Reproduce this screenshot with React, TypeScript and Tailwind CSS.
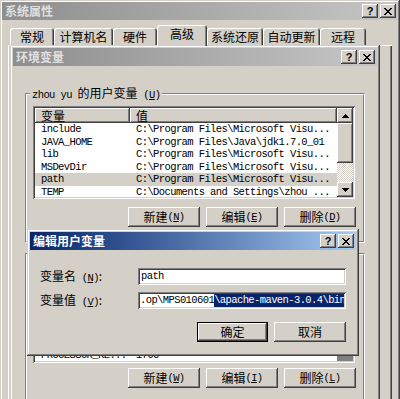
import type { ReactNode } from "react";

// classic win2k bevels
const raised =
  "bg-[#d4d0c8] shadow-[inset_-1px_-1px_#404040,inset_1px_1px_#ffffff,inset_-2px_-2px_#808080,inset_2px_2px_#d4d0c8]";
const sunken =
  "shadow-[inset_1px_1px_#808080,inset_-1px_-1px_#ffffff,inset_2px_2px_#404040,inset_-2px_-2px_#d4d0c8]";
const frame =
  "bg-[#d4d0c8] shadow-[inset_-1px_-1px_#404040,inset_1px_1px_#d4d0c8,inset_-2px_-2px_#808080,inset_2px_2px_#ffffff]";
const mono =
  "font-['Liberation_Mono','Noto_Sans_CJK_SC',monospace] text-[10.5px] tracking-[-0.6px]";

const tabs = [
  { label: "常规", w: "w-[44px]" },
  { label: "计算机名", w: "w-[59px]" },
  { label: "硬件", w: "w-[44px]" },
  { label: "高级", w: "w-[50px]", active: true },
  { label: "系统还原", w: "w-[56px]" },
  { label: "自动更新", w: "w-[57px]" },
  { label: "远程", w: "w-[46px]" },
];

const userVars = [
  ["include", "C:\\Program Files\\Microsoft Visu..."],
  ["JAVA_HOME", "C:\\Program Files\\Java\\jdk1.7.0_01"],
  ["lib", "C:\\Program Files\\Microsoft Visu..."],
  ["MSDevDir", "C:\\Program Files\\Microsoft Visu..."],
  ["path", "C:\\Program Files\\Microsoft Visu..."],
  ["TEMP", "C:\\Documents and Settings\\zhou ..."],
];

const systemVars = [
  ["ComSpec", "C:\\WINDOWS\\system32\\cmd.exe"],
  ["NUMBER_OF_PR...", "2"],
  ["OS", "Windows_NT"],
  ["Path", "C:\\Program Files\\Microsoft Visu..."],
  ["PATHEXT", ".COM;.EXE;.BAT;.CMD;.VBS;.VBE;..."],
  ["PROCESSOR_AR...", "x86"],
  ["PROCESSOR_RE...", "1706"],
];

function Key({ k }: { k: string }) {
  return (
    <span className={mono}>
      {" "}(<span className="underline">{k}</span>)
    </span>
  );
}

function CloseGlyph() {
  return (
    <svg width="8" height="7" viewBox="0 0 8 7" shapeRendering="crispEdges">
      <path d="M0 0h2l2 2.4L6 0h2L5 3.5 8 7H6L4 4.6 2 7H0l3-3.5z" fill="#000" />
    </svg>
  );
}

function CapButton({ children }: { children: ReactNode }) {
  return (
    <div className={`flex h-[14px] w-[16px] items-center justify-center ${raised}`}>
      {children}
    </div>
  );
}

function TitleBar({ title, active }: { title: string; active?: boolean }) {
  return (
    <div
      className={`flex h-[18px] items-center justify-between pl-[3px] pr-[2px] ${
        active
          ? "bg-linear-to-r from-[#0a246a] to-[#a6caf0]"
          : "bg-linear-to-r from-[#8e8e8e] to-[#c6c6c6]"
      }`}
    >
      <span
        className={`text-[12px] font-bold leading-none ${
          active ? "text-white" : "text-[#e0e0e0]"
        }`}
      >
        {title}
      </span>
      <div className="flex gap-[2px]">
        <CapButton>
          <span className="font-['Liberation_Sans',sans-serif] text-[11px] font-bold leading-none">
            ?
          </span>
        </CapButton>
        <CapButton>
          <CloseGlyph />
        </CapButton>
      </div>
    </div>
  );
}

function Btn({ children, w = "w-[72px]" }: { children: ReactNode; w?: string }) {
  return (
    <div className={`flex h-[20px] ${w} items-center justify-center leading-none ${raised}`}>
      {children}
    </div>
  );
}

function Arrow({ down }: { down?: boolean }) {
  return (
    <svg width="7" height="4" viewBox="0 0 7 4" shapeRendering="crispEdges">
      <path d={down ? "M0 0h7L3.5 4z" : "M3.5 0L7 4H0z"} fill="#000" />
    </svg>
  );
}

function ScrollBar({ tail }: { tail?: boolean }) {
  return (
    <div className="flex w-[16px] flex-col">
      <div className={`flex h-[15px] items-center justify-center ${raised}`}>
        <Arrow />
      </div>
      <div className={`h-[40px] ${raised}`} />
      <div className="flex-1 [background-image:repeating-conic-gradient(#ffffff_0_25%,#d4d0c8_0_50%)] [background-size:2px_2px]" />
      {tail ? (
        <div className="h-[8px] bg-[#808080]" />
      ) : (
        <div className={`flex h-[15px] items-center justify-center ${raised}`}>
          <Arrow down />
        </div>
      )}
    </div>
  );
}

function VarList({
  rows,
  selected,
  size,
  bottom,
}: {
  rows: string[][];
  selected?: number;
  size: string;
  bottom?: boolean;
}) {
  return (
    <div className={`flex ${size} p-[2px] ${sunken}`}>
      <div className="flex min-w-0 flex-1 flex-col overflow-hidden bg-white">
        <div className="flex h-[15px] shrink-0 leading-none">
          <div className={`flex w-[95px] items-center pl-[6px] ${raised}`}>变量</div>
          <div className={`flex flex-1 items-center pl-[6px] ${raised}`}>值</div>
        </div>
        <div className={`flex min-h-0 flex-1 flex-col overflow-hidden ${bottom ? "justify-end" : ""}`}>
          {rows.map(([name, value], i) => (
            <div
              key={name + i}
              className={`flex h-[12.5px] shrink-0 items-center whitespace-nowrap leading-none ${mono} ${
                i === selected ? "bg-[#d4d0c8]" : ""
              }`}
            >
              <span className="w-[95px] pl-[6px]">{name}</span>
              <span className="pl-[6px]">{value}</span>
            </div>
          ))}
        </div>
      </div>
      <ScrollBar tail={bottom} />
    </div>
  );
}

function GroupBox({
  label,
  className,
  children,
}: {
  label: ReactNode;
  className: string;
  children: ReactNode;
}) {
  return (
    <div
      className={`relative ml-[12px] w-[340px] border border-[#808080] border-r-white border-b-white ${className}`}
    >
      <div className="h-full border border-white border-r-[#808080] border-b-[#808080]">
        {children}
      </div>
      <div className="absolute -top-[8px] left-[4px] bg-[#d4d0c8] px-[2px] leading-[14px]">
        {label}
      </div>
    </div>
  );
}

export default function App() {
  return (
    <div className="relative h-[399px] w-[400px] overflow-hidden bg-[#d4d0c8] font-['Noto_Sans_CJK_SC',sans-serif] text-[12px] text-black">
      {/* 系统属性 */}
      <div className={`absolute left-0 top-0 h-[440px] w-[400px] p-[2px] ${frame}`}>
        <TitleBar title="系统属性" />
        <div className="pl-[6px] pt-[5px]">
          <div className="flex h-[20px] items-end pl-[2px]">
            {tabs.map((t) =>
              t.active ? (
                <div
                  key={t.label}
                  className={`relative z-10 -mb-px flex h-[21px] ${t.w} items-center justify-center rounded-t-[3px] bg-[#d4d0c8] pb-[3px] leading-none shadow-[inset_1px_1px_#ffffff,inset_-1px_0_#404040,inset_-2px_0_#808080]`}
                >
                  {t.label}
                </div>
              ) : (
                <div
                  key={t.label}
                  className={`flex h-[17px] ${t.w} items-center justify-center rounded-t-[3px] leading-none shadow-[inset_1px_1px_#ffffff,inset_-1px_0_#404040,inset_-2px_0_#808080]`}
                >
                  {t.label}
                </div>
              )
            )}
          </div>
          <div className="h-[400px] w-[384px] shadow-[inset_1px_1px_#ffffff,inset_-1px_-1px_#404040,inset_-2px_-2px_#808080]" />
        </div>
      </div>

      {/* 环境变量 */}
      <div className={`absolute left-[10px] top-[45px] h-[400px] w-[370px] p-[3px] ${frame}`}>
        <TitleBar title="环境变量" />
        <GroupBox
          className="mt-[27px] h-[150px]"
          label={
            <>
              <span className={mono}>zhou yu </span>的用户变量
              <Key k="U" />
            </>
          }
        >
          <div className="ml-[6px] mt-[11px]">
            <VarList rows={userVars} selected={4} size="h-[93px] w-[322px]" />
          </div>
          <div className="mt-[8px] flex justify-end gap-[6px] pr-[7px]">
            <Btn>
              新建<Key k="N" />
            </Btn>
            <Btn>
              编辑<Key k="E" />
            </Btn>
            <Btn>
              删除<Key k="D" />
            </Btn>
          </div>
        </GroupBox>
        <GroupBox
          className="mt-[10px] h-[200px]"
          label={
            <>
              系统变量<Key k="S" />
            </>
          }
        >
          <div className="ml-[6px] mt-[11px]">
            <VarList rows={systemVars} size="h-[97px] w-[322px]" bottom />
          </div>
          <div className="mt-[5px] flex justify-end gap-[6px] pr-[7px]">
            <Btn>
              新建<Key k="W" />
            </Btn>
            <Btn>
              编辑<Key k="I" />
            </Btn>
            <Btn>
              删除<Key k="L" />
            </Btn>
          </div>
        </GroupBox>
      </div>

      {/* 编辑用户变量 */}
      <div className={`absolute left-[27px] top-[229px] h-[127px] w-[332px] p-[3px] ${frame}`}>
        <TitleBar title="编辑用户变量" active />
        <div className="px-[10px] pt-[18px]">
          <div className="flex items-center">
            <span className="w-[98px] leading-none">
              变量名<Key k="N" />:
            </span>
            <div className={`flex h-[17px] w-[208px] items-center bg-white p-[2px] pl-[3px] ${sunken}`}>
              <span className={`leading-none ${mono}`}>path</span>
            </div>
          </div>
          <div className="mt-[7px] flex items-center">
            <span className="w-[98px] leading-none">
              变量值<Key k="V" />:
            </span>
            <div className={`flex h-[17px] w-[208px] items-center bg-white p-[2px] ${sunken}`}>
              <div className={`flex h-full w-full items-center overflow-hidden whitespace-nowrap leading-none ${mono}`}>
                <span>.op\MPS010601</span>
                <span className="flex h-full items-center bg-[#0a246a] text-white">
                  \apache-maven-3.0.4\bin
                </span>
              </div>
            </div>
          </div>
          <div className="mt-[13px] flex justify-end gap-[6px]">
            <div className="h-[20px] w-[71px] border border-black">
              <div className={`flex h-full w-full items-center justify-center leading-none ${raised}`}>
                确定
              </div>
            </div>
            <Btn>取消</Btn>
          </div>
        </div>
      </div>
    </div>
  );
}
